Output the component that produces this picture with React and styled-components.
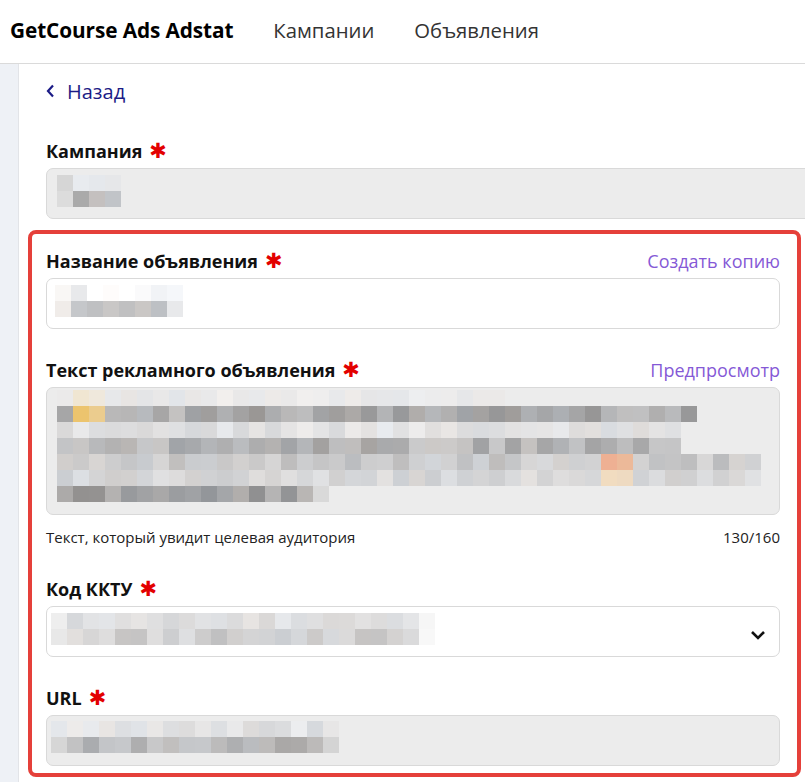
import React from "react";
import styled, { createGlobalStyle } from "styled-components";

const GlobalStyle = createGlobalStyle`
  html, body { margin: 0; padding: 0; background: #ffffff; overflow: hidden; }
  body { font-family: "Open Sans", "Liberation Sans", sans-serif; color: #111; }
  * { box-sizing: border-box; }
`;

const Page = styled.div`
  width: 805px;
  height: 782px;
  display: flex;
  flex-direction: column;
  overflow: hidden;
`;

const Header = styled.header`
  height: 64px;
  flex: none;
  display: flex;
  align-items: center;
  gap: 40px;
  padding: 0 0 4px 10px;
  border-bottom: 1px solid #dadada;
`;

const Brand = styled.div`
  font-size: 20.8px;
  font-weight: 700;
  letter-spacing: -0.1px;
  color: #000;
`;

const NavLink = styled.a`
  font-size: 20.3px;
  color: #333;
  text-decoration: none;
`;

const Body = styled.div`
  flex: 1;
  display: flex;
  min-height: 0;
`;

const Side = styled.aside`
  width: 19px;
  flex: none;
  background: #eef1f6;
  border-right: 1px solid #e2e4e8;
`;

const Main = styled.main`
  flex: 1;
  padding: 14px 0 0 27px;
  display: flex;
  flex-direction: column;
  min-width: 0;
`;

const Back = styled.a`
  display: flex;
  align-items: center;
  gap: 12px;
  font-size: 20px;
  color: #1b1b86;
  text-decoration: none;
  height: 26px;
  margin-bottom: 35px;
`;

const Field = styled.div`
  display: flex;
  flex-direction: column;
  flex: none;
  gap: 5px;
  margin-bottom: ${(p) => p.$mb ?? 29}px;
`;

const LabelRow = styled.div`
  display: flex;
  justify-content: space-between;
  align-items: center;
  height: 24px;
`;

const Label = styled.label`
  font-size: 18px;
  font-weight: 700;
  color: #111;
  display: flex;
  align-items: center;
  gap: 7px;
`;

const Star = styled.span`
  font-family: "DejaVu Sans", sans-serif;
  color: #e30000;
  font-size: 21px;
  line-height: 1;
  font-weight: 700;
`;

const LinkBtn = styled.a`
  font-size: 18px;
  color: #8559d6;
  text-decoration: none;
`;

const Box = styled.div`
  width: ${(p) => p.$w || 734}px;
  height: ${(p) => p.$h || 51}px;
  flex: none;
  border: 1px solid #d9d9d9;
  border-radius: 7px;
  background: ${(p) => (p.$filled ? "#ececec" : "#ffffff")};
  display: flex;
  align-items: flex-start;
  justify-content: space-between;
  padding: ${(p) => p.$pad || "6px 0 0 10px"};
`;

const Highlight = styled.section`
  width: 773px;
  flex: none;
  margin-left: -18px;
  margin-top: -18px;
  border: 4px solid #e5403a;
  border-radius: 8px;
  padding: 15px 17px 7px 14px;
  display: flex;
  flex-direction: column;
`;

const HelpRow = styled.div`
  display: flex;
  justify-content: space-between;
  align-items: center;
  font-size: 15px;
  color: #222;
  height: 20px;
  margin-top: 7px;
`;

const ChevronWrap = styled.span`
  align-self: center;
  margin-right: 13px;
  display: flex;
`;

function hash(n) {
  let x = Math.sin(n * 12.9898 + 78.233) * 43758.5453;
  return x - Math.floor(x);
}

function gray(seed, lo, hi) {
  const v = Math.round(lo + hash(seed) * (hi - lo));
  const t = Math.round((hash(seed + 0.5) - 0.5) * 6);
  const c = (k) => Math.max(0, Math.min(255, k)).toString(16).padStart(2, "0");
  return "#" + c(v + t) + c(v) + c(v - t + 1);
}

function Mosaic({ rows, seed = 1, cell = 16 }) {
  const w = Math.max(...rows.map((r) => r.len)) * cell;
  const h = rows.length * cell;
  return (
    <svg width={w} height={h} viewBox={`0 0 ${w} ${h}`} style={{ display: "block", flex: "none" }}>
      {rows.map((r, ri) =>
        Array.from({ length: r.len }).map((_, ci) => {
          const fill =
            (r.over && r.over[ci]) || gray(seed * 1000 + ri * 97 + ci, r.lo, r.hi);
          return (
            <rect key={ri + "-" + ci} x={ci * cell} y={ri * cell} width={cell} height={cell} fill={fill} />
          );
        })
      )}
    </svg>
  );
}

const campaignRows = [
  { len: 4, lo: 0xe6, hi: 0xee, over: { 0: "#d6d6d6" } },
  { len: 4, lo: 0xc0, hi: 0xc6, over: { 0: "#dcdcdc", 1: "#aaaaaa", 2: "#c4c0bf" } },
];

const nameRows = [
  { len: 8, lo: 0xf0, hi: 0xfc, over: { 0: "#f9f7f5", 1: "#e8e9eb", 2: "#ffffff", 4: "#ffffff" } },
  { len: 8, lo: 0xbe, hi: 0xd2, over: { 0: "#f0ece9", 7: "#e8e9eb" } },
];

const textRows = [
  { len: 28, lo: 0xe3, hi: 0xf0, over: { 1: "#f0e6d2", 2: "#efe8dc" } },
  { len: 40, lo: 0x96, hi: 0xc2, over: { 1: "#ecc46e", 2: "#ebcc8e" } },
  { len: 39, lo: 0xd8, hi: 0xee },
  { len: 39, lo: 0xa0, hi: 0xcc },
  { len: 44, lo: 0xbc, hi: 0xda, over: { 34: "#eeb093", 35: "#ecb999" } },
  { len: 44, lo: 0xcc, hi: 0xe3, over: { 34: "#f1dcc0", 35: "#eedac1" } },
  { len: 17, lo: 0x90, hi: 0xb6, over: { 16: "#d9d9d9" } },
];

const kktuRows = [
  { len: 24, lo: 0xd4, hi: 0xea, over: { 0: "#eeeeee", 23: "#f6f6f6" } },
  { len: 24, lo: 0xbe, hi: 0xe0, over: { 0: "#e8e8e8", 23: "#f8f8f8" } },
];

const urlRows = [
  { len: 18, lo: 0xd8, hi: 0xee },
  { len: 18, lo: 0xa8, hi: 0xcc, over: { 0: "#d6d6d6", 17: "#d4d4d4" } },
];

function Required() {
  return <Star>✱</Star>;
}

export default function App() {
  return (
    <>
      <GlobalStyle />
      <Page>
        <Header>
          <Brand>GetCourse Ads Adstat</Brand>
          <NavLink>Кампании</NavLink>
          <NavLink>Объявления</NavLink>
        </Header>
        <Body>
          <Side />
          <Main>
            <Back>
              <svg width="9" height="14" viewBox="0 0 9 14">
                <polyline points="7,1.5 2,7 7,12.5" fill="none" stroke="#1b1b86" strokeWidth="2.2" />
              </svg>
              Назад
            </Back>

            <Field>
              <LabelRow>
                <Label>
                  Кампания <Required />
                </Label>
              </LabelRow>
              <Box $filled $w={780}>
                <Mosaic rows={campaignRows} seed={2} />
              </Box>
            </Field>

            <Highlight>
              <Field>
                <LabelRow>
                  <Label>
                    Название объявления <Required />
                  </Label>
                  <LinkBtn>Создать копию</LinkBtn>
                </LabelRow>
                <Box $pad="6px 0 0 8px">
                  <Mosaic rows={nameRows} seed={3} />
                </Box>
              </Field>

              <Field $mb={30}>
                <LabelRow>
                  <Label>
                    Текст рекламного объявления <Required />
                  </Label>
                  <LinkBtn>Предпросмотр</LinkBtn>
                </LabelRow>
                <Box $filled $h={128} $pad="2px 0 0 10px">
                  <Mosaic rows={textRows} seed={4} />
                </Box>
                <HelpRow>
                  <span>Текст, который увидит целевая аудитория</span>
                  <span>130/160</span>
                </HelpRow>
              </Field>

              <Field>
                <LabelRow>
                  <Label>
                    Код ККТУ <Required />
                  </Label>
                </LabelRow>
                <Box $pad="6px 0 0 4px">
                  <Mosaic rows={kktuRows} seed={5} />
                  <ChevronWrap>
                    <svg width="16" height="10" viewBox="0 0 16 10">
                      <polyline points="2,2 8,8 14,2" fill="none" stroke="#111" strokeWidth="2.6" />
                    </svg>
                  </ChevronWrap>
                </Box>
              </Field>

              <Field $mb={0}>
                <LabelRow>
                  <Label>
                    URL <Required />
                  </Label>
                </LabelRow>
                <Box $filled $pad="5px 0 0 4px">
                  <Mosaic rows={urlRows} seed={6} />
                </Box>
              </Field>
            </Highlight>
          </Main>
        </Body>
      </Page>
    </>
  );
}
